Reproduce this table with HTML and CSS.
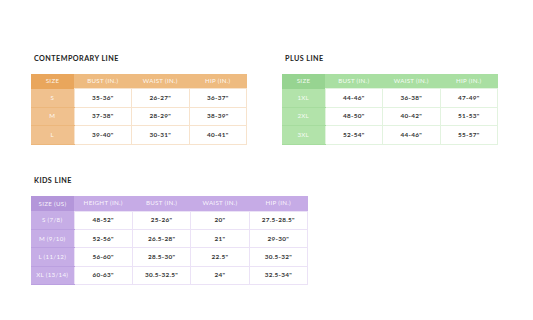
FILE: index.html
```html
<!DOCTYPE html>
<html>
<head>
<meta charset="utf-8">
<link rel="stylesheet" href="styles.css">
</head>
<body>
<div class="page">
  <div class="row-top">
    <section class="chart chart-c">
      <h2 class="title">CONTEMPORARY LINE</h2>
      <table class="tbl orange">
        <thead><tr><th class="first">SIZE</th><th>BUST (IN.)</th><th>WAIST (IN.)</th><th>HIP (IN.)</th></tr></thead>
        <tbody>
          <tr><th class="first">S</th><td>35-36"</td><td>26-27"</td><td>36-37"</td></tr>
          <tr><th class="first">M</th><td>37-38"</td><td>28-29"</td><td>38-39"</td></tr>
          <tr><th class="first">L</th><td>39-40"</td><td>30-31"</td><td>40-41"</td></tr>
        </tbody>
      </table>
    </section>
    <section class="chart chart-p">
      <h2 class="title">PLUS LINE</h2>
      <table class="tbl green">
        <thead><tr><th class="first">SIZE</th><th>BUST (IN.)</th><th>WAIST (IN.)</th><th>HIP (IN.)</th></tr></thead>
        <tbody>
          <tr><th class="first">1XL</th><td>44-46"</td><td>36-38"</td><td>47-49"</td></tr>
          <tr><th class="first">2XL</th><td>48-50"</td><td>40-42"</td><td>51-53"</td></tr>
          <tr><th class="first">3XL</th><td>52-54"</td><td>44-46"</td><td>55-57"</td></tr>
        </tbody>
      </table>
    </section>
  </div>
  <section class="chart chart-k">
    <h2 class="title">KIDS LINE</h2>
    <table class="tbl purple">
      <thead><tr><th class="first">SIZE (US)</th><th>HEIGHT (IN.)</th><th>BUST (IN.)</th><th>WAIST (IN.)</th><th>HIP (IN.)</th></tr></thead>
      <tbody>
        <tr><th class="first">S (7/8)</th><td>48-52"</td><td>25-26"</td><td>20"</td><td>27.5-28.5"</td></tr>
        <tr><th class="first">M (9/10)</th><td>52-56"</td><td>26.5-28"</td><td>21"</td><td>29-30"</td></tr>
        <tr><th class="first">L (11/12)</th><td>56-60"</td><td>28.5-30"</td><td>22.5"</td><td>30.5-32"</td></tr>
        <tr><th class="first">XL (13/14)</th><td>60-63"</td><td>30.5-32.5"</td><td>24"</td><td>32.5-34"</td></tr>
      </tbody>
    </table>
  </section>
</div>
</body>
</html>
```
FILE: styles.css
```css
html, body {
  margin: 0;
  padding: 0;
  background: #ffffff;
}
body {
  width: 533px;
  height: 320px;
  overflow: hidden;
  font-family: Lato, "Open Sans", sans-serif;
}
.page {
  padding: 53px 0 0 31px;
}
.row-top {
  display: flex;
  gap: 35px;
}
.chart-c, .chart-p {
  width: 216px;
}
.chart-k {
  width: 277px;
  margin-top: 30px;
}
.title {
  margin: 0 0 9px 3px;
  font-size: 7.2px;
  line-height: 12px;
  font-weight: 700;
  letter-spacing: 0.45px;
  color: #222;
}
.tbl {
  width: 100%;
  border-collapse: collapse;
  table-layout: fixed;
}
.tbl th, .tbl td {
  padding: 0;
  text-align: center;
  font-size: 6.2px;
  line-height: 8px;
  letter-spacing: 0.3px;
}
.tbl thead th {
  height: 14px;
  color: rgba(255,255,255,0.9);
  font-weight: 400;
}
.tbl tbody th, .tbl tbody td {
  height: 17.6px;
}
.tbl tbody th {
  color: rgba(255,255,255,0.9);
  font-weight: 400;
}
.tbl td {
  color: #333;
  font-weight: 700;
  font-size: 6.4px;
}
.tbl .first {
  width: 43px;
}
.chart-k .tbl thead th { height: 15px; }
.chart-k .tbl tbody th, .chart-k .tbl tbody td { height: 17.3px; }

/* orange */
.orange thead th { background: #eebb80; }
.orange thead th.first { background: #e9a65c; }
.orange tbody th { background: #f0c18e; border-bottom: 1px solid #ecb77c; }
.orange td { border: 1px solid #f7e3cd; }
/* green */
.green thead th { background: #a9dfa2; }
.green thead th.first { background: #97d491; }
.green tbody th { background: #b2e3aa; border-bottom: 1px solid #a6dc9e; }
.green td { border: 1px solid #e2f3df; }
/* purple */
.purple thead th { background: #c6abe6; }
.purple thead th.first { background: #b496da; }
.purple tbody th { background: #c6ade6; border-bottom: 1px solid #bba0e0; }
.purple td { border: 1px solid #ebe2f6; }
```
